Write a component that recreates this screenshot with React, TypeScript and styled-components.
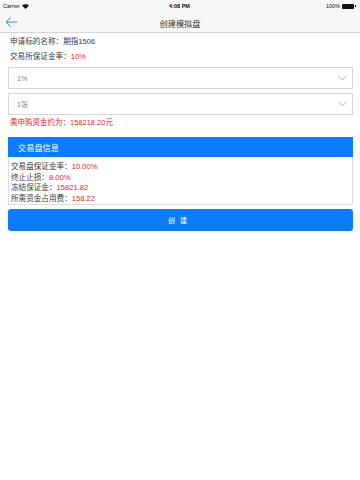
import React from "react";
import styled, { createGlobalStyle } from "styled-components";

const GlobalStyle = createGlobalStyle`
  html, body {
    margin: 0;
    padding: 0;
    background: #ffffff;
  }
  body {
    font-family: "Liberation Sans", "Noto Sans CJK SC", sans-serif;
    color: #333;
  }
`;

const Page = styled.div`
  width: 360px;
  height: 480px;
  background: #fff;
`;

const TopBar = styled.div`
  background: #f7f7f7;
  border-bottom: 1px solid #d6d6d6;
`;

const StatusBar = styled.div`
  height: 12px;
  display: grid;
  grid-template-columns: 1fr auto 1fr;
  align-items: center;
  padding: 0 4px 0 3px;
  font-size: 5.5px;
  color: #111;
`;

const StatusLeft = styled.div`
  display: flex;
  align-items: center;
  gap: 2px;
`;

const StatusTime = styled.div`
  font-weight: bold;
`;

const StatusRight = styled.div`
  display: flex;
  justify-content: flex-end;
  align-items: center;
  gap: 2px;
`;

const Battery = styled.div`
  width: 12px;
  height: 5px;
  background: #111;
  border-radius: 1px;
  position: relative;
  margin-right: 2px;
  &::after {
    content: "";
    position: absolute;
    right: -2px;
    top: 1.5px;
    width: 1px;
    height: 2px;
    background: #111;
  }
`;

const NavBar = styled.div`
  height: 20px;
  display: grid;
  grid-template-columns: 40px 1fr 40px;
  align-items: center;
`;

const BackButton = styled.div`
  display: flex;
  align-items: center;
  padding-left: 5px;
`;

const NavTitle = styled.div`
  text-align: center;
  font-size: 8.2px;
  color: #333;
  padding-top: 1px;
`;

const Content = styled.div`
  padding: 1px 7px 0 8px;
  display: flex;
  flex-direction: column;
`;

const InfoLine = styled.div`
  font-size: 7.6px;
  line-height: 15px;
  color: #3a3a3a;
  padding-left: 2px;
`;

const Red = styled.span`
  color: #e8242b;
`;

const SelectBox = styled.div<{ $gap: number }>`
  height: 20px;
  border: 1px solid #d8d8d8;
  display: flex;
  align-items: center;
  justify-content: space-between;
  padding: 0 5px 0 8px;
  font-size: 7.2px;
  color: #888;
  margin-top: ${(p) => p.$gap}px;
`;

const Notice = styled.div`
  font-size: 7.5px;
  color: #e8242b;
  line-height: 16px;
  padding-left: 2px;
`;

const Panel = styled.div`
  margin-top: 6px;
  border: 1px solid #dedede;
  border-top: none;
`;

const PanelHeader = styled.div`
  height: 20px;
  background: #0a7cff;
  color: #fff;
  font-size: 8.2px;
  display: flex;
  align-items: center;
  padding-left: 10px;
  margin: 0 -1px;
`;

const PanelBody = styled.div`
  padding: 5px 2px 0;
  font-size: 7.6px;
  line-height: 10.7px;
  height: 42px;
  color: #3a3a3a;
`;

const CreateButton = styled.button`
  margin-top: 4px;
  height: 22px;
  border: none;
  border-radius: 3px;
  background: #0a7cff;
  color: #fff;
  font-family: inherit;
  font-size: 7px;
  letter-spacing: 5px;
  padding-left: 5px;
`;

const Chevron = () => (
  <svg width="9" height="6" viewBox="0 0 9 6">
    <path d="M0.5 0.8 L4.5 4.8 L8.5 0.8" fill="none" stroke="#999" strokeWidth="0.8" />
  </svg>
);

export default function App() {
  return (
    <Page>
      <GlobalStyle />
      <TopBar>
        <StatusBar>
          <StatusLeft>
            Carrier
            <svg width="7" height="5" viewBox="0 0 7 5">
              <path d="M0 1.6 A5 5 0 0 1 7 1.6 L3.5 5 Z" fill="#111" />
            </svg>
          </StatusLeft>
          <StatusTime>4:08 PM</StatusTime>
          <StatusRight>
            100%
            <Battery />
          </StatusRight>
        </StatusBar>
        <NavBar>
          <BackButton>
            <svg width="13" height="10" viewBox="0 0 13 10">
              <path d="M12.5 5 H1 M5.5 0.5 L1 5 L5.5 9.5" fill="none" stroke="#2f8cf0" strokeWidth="1" />
            </svg>
          </BackButton>
          <NavTitle>创建模拟盘</NavTitle>
          <div />
        </NavBar>
      </TopBar>
      <Content>
        <InfoLine>申请标的名称：期指1506</InfoLine>
        <InfoLine>
          交易所保证金率：<Red>10%</Red>
        </InfoLine>
        <SelectBox $gap={3}>
          1%
          <Chevron />
        </SelectBox>
        <SelectBox $gap={4}>
          1张
          <Chevron />
        </SelectBox>
        <Notice>需申购资金约为：158218.20元</Notice>
        <Panel>
          <PanelHeader>交易盘信息</PanelHeader>
          <PanelBody>
            <div>
              交易盘保证金率：<Red>10.00%</Red>
            </div>
            <div>
              终止止损：<Red>8.00%</Red>
            </div>
            <div>
              冻结保证金：<Red>15821.82</Red>
            </div>
            <div>
              所需资金占用费：<Red>158.22</Red>
            </div>
          </PanelBody>
        </Panel>
        <CreateButton>创建</CreateButton>
      </Content>
    </Page>
  );
}
